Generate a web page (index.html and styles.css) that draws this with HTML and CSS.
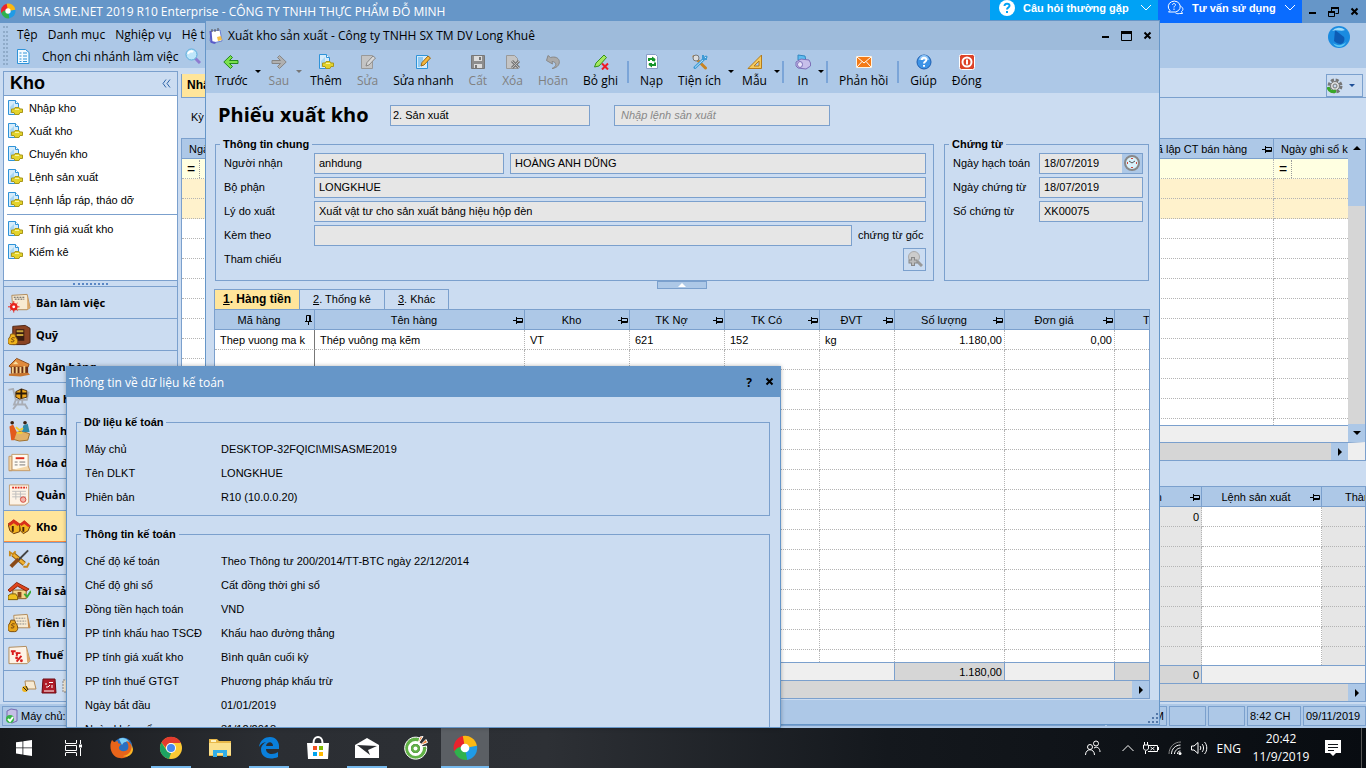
FILE: index.html
```html
<!DOCTYPE html>
<html lang="vi">
<head>
    <meta charset="UTF-8">
    <meta name="viewport" content="width=device-width, initial-scale=1.0">
    <title>MISA SME.NET 2019 R10 Enterprise</title>
    <link rel="stylesheet" href="styles.css">
</head>
<body>
    <svg class="sprite" aria-hidden="true">
        <symbol id="i-misa" viewBox="0 0 24 24">
            <path d="M12 12 2 15A11 11 0 0 1 10 1Q15 5 12 12z" fill="#e8232d"/>
            <path d="M12 12 10 1A11 11 0 0 1 23 10Q18 15 12 12z" fill="#fbb813"/>
            <path d="M12 12 23 10A11 11 0 0 1 14 23Q9 19 12 12z" fill="#1f9be6"/>
            <path d="M12 12 14 23A11 11 0 0 1 2 15Q6 9 12 12z" fill="#2fb24c"/>
            <circle cx="12" cy="12" r="4" fill="#fff"/>
        </symbol>
        <symbol id="i-new" viewBox="0 0 16 16">
            <path d="M1.500 .5h7l3 3v11h-10z" fill="#d5ecfb" stroke="#2f93d8"/>
            <path d="M8.500 .5v3h3" fill="#fff" stroke="#2f93d8"/>
            <path d="M3 13V7l4-4v10z" fill="#a7d6f5"/>
            <path d="M8 7.500h4l1 1.500h2.500v3.500H13L12 14.500H8L7 12.500H4.500V9H7z" fill="#e3d32c" stroke="#a8971a" stroke-linejoin="round"/>
            <path d="M8 9.500h4" stroke="#f8f3a0"/>
        </symbol>
        <symbol id="i-edit" viewBox="0 0 16 16">
            <path d="M1.500 1.500h11v13h-11z" fill="#d5ecfb" stroke="#2f93d8"/>
            <path d="M3 3h5v5L5 13H3z" fill="#8fc9f2"/>
            <path d="M6 12l1-3.500L13 2l2.500 2L9 11z" fill="#f6b73c" stroke="#9b6a17"/>
        </symbol>
        <symbol id="i-edit-off" viewBox="0 0 16 16">
            <path d="M1.500 1.500h11v13h-11z" fill="#c4c4c4" stroke="#999"/>
            <path d="M6 12l1-3.500L13 2l2.500 2L9 11z" fill="#d8d8d8" stroke="#888"/>
        </symbol>
        <symbol id="i-left" viewBox="0 0 16 16">
            <path d="M7.500 1.500 9.500 3.500 6.500 6.500H15v3H6.500l3 3-2 2L.8 8z" fill="#7be04c" stroke="#238a1c" stroke-linejoin="round"/>
        </symbol>
        <symbol id="i-right" viewBox="0 0 16 16">
            <path d="M8.500 1.500 6.500 3.500 9.500 6.500H1v3h8.500l-3 3 2 2L15.200 8z" fill="#b0b0b0" stroke="#858585" stroke-linejoin="round"/>
        </symbol>
        <symbol id="i-save" viewBox="0 0 16 16">
            <path d="M1.500 1.500h13v13h-13z" fill="#8d8d8d" stroke="#777"/>
            <path d="M4 2h8v5H4zM4 10h8v4H4z" fill="#dcdcdc"/>
            <path d="M9 3h2v3H9zM5 11h2v3H5z" fill="#777"/>
        </symbol>
        <symbol id="i-del" viewBox="0 0 16 16">
            <path d="M1.500 1.500h8l3 3v10h-11z" fill="#c4c4c4" stroke="#999"/>
            <path d="M7 7l7 7M14 7l-7 7" stroke="#777" stroke-width="3"/>
            <path d="M7 7l7 7M14 7l-7 7" stroke="#bbb"/>
        </symbol>
        <symbol id="i-undo" viewBox="0 0 16 16">
            <path d="M7 14.500c5-1.500 5-7 0-7L7.500 10 1.500 6.500 3 1.500l2.500 2c11-3 12 10 1.500 11z" fill="#aaa" stroke="#888"/>
        </symbol>
        <symbol id="i-unpost" viewBox="0 0 16 16">
            <path d="M1.500 13 3 9l8-8 2.500 2.500L6 12z" fill="#a4e860" stroke="#35911b"/>
            <path d="M9 9.500l6 6M15 9.500l-6 6" stroke="#ee1c24" stroke-width="2"/>
        </symbol>
        <symbol id="i-reload" viewBox="0 0 16 16">
            <path d="M2.500 .5h9l2 2v12h-11z" fill="#fff" stroke="#8a9cc8"/>
            <path d="M5 7V5h4M11 8.500V11H7" stroke="#15942b" stroke-width="2" fill="none"/>
            <path d="M8 2.500l3.500 2.500L11 7.500 8 7zM8 9v4.500L4.500 11l.5-2z" fill="#15942b"/>
        </symbol>
        <symbol id="i-tools" viewBox="0 0 16 16">
            <path d="M2 2.500 13.500 14" stroke="#c98423" stroke-width="3" stroke-linecap="round"/>
            <path d="M14 3 3 13.500" stroke="#3e9ad5" stroke-width="3" stroke-linecap="round"/>
            <path d="M14 3 3 13.500" stroke="#c9e9fb"/>
            <circle cx="4" cy="4" r="3" fill="#ddd" stroke="#777"/>
            <path d="M11 1v4h4" fill="none" stroke="#3e9ad5" stroke-width="2"/>
        </symbol>
        <symbol id="i-ruler" viewBox="0 0 16 16">
            <path d="M1 14.500 14.500 1v13.500z" fill="#f5c95a" stroke="#b37b1c"/>
            <path d="M7 12l5-5v5z" fill="#adc8e7" stroke="#b37b1c"/>
        </symbol>
        <symbol id="i-print" viewBox="0 0 16 16">
            <path d="M3 6V1l7 1 1 5z" fill="#5dbcf0" stroke="#3387c0"/>
            <path d="M1 8l5-3 8 1 1.500 3v3L11 15l-8-1-2-2z" fill="#c7bfea" stroke="#7d70b8"/>
            <ellipse cx="5" cy="10.500" rx="2.500" ry="3" fill="#e7e3fa" stroke="#7d70b8"/>
        </symbol>
        <symbol id="i-mail" viewBox="0 0 16 16">
            <path d="M.5 2.500h15v11H.5z" fill="#f47a16" stroke="#fff3e0"/>
            <path d="M1 3l7 6 7-6M1 13l5-5.500M15 13l-5-5.500" stroke="#fff" fill="none"/>
        </symbol>
        <symbol id="i-help" viewBox="0 0 16 16">
            <circle cx="8" cy="8" r="7" fill="#3d93e6" stroke="#1f5fb0"/>
            <path d="M3 6a5 5 0 0 1 10 0z" fill="#8cc4f7"/>
            <path d="M5.800 6c0-3 4.600-3 4.600-.3C10.400 7.500 8 7.500 8 9.500M8 11v1.800" stroke="#fff" stroke-width="2" fill="none"/>
        </symbol>
        <symbol id="i-power" viewBox="0 0 16 16">
            <rect x=".5" y=".5" width="15" height="15" rx="2" fill="#dd4226" stroke="#fff"/>
            <circle cx="8" cy="8" r="4.500" fill="none" stroke="#fff" stroke-width="2"/>
            <path d="M8 5.500v5" stroke="#fff" stroke-width="2"/>
        </symbol>
        <symbol id="i-pin" viewBox="0 0 10 10">
            <path d="M0 5.500h3M3.500 2v7M4 3.500h5.500v4H4M4 6.500h5" stroke="#000" fill="none"/>
        </symbol>
        <symbol id="i-pin-down" viewBox="0 0 10 10">
            <path d="M5.500 10V7M2 6.500h7M3.500 6V.5h4V6M6.500 1v5" stroke="#000" fill="none"/>
        </symbol>
        <symbol id="i-min" viewBox="0 0 10 10"><path d="M1 6h7" stroke="#000" stroke-width="2"/></symbol>
        <symbol id="i-max" viewBox="0 0 12 10"><path d="M.5 1.500h10v8H.5z" fill="none" stroke="#000"/><path d="M0 1.500h11" stroke="#000" stroke-width="3"/></symbol>
        <symbol id="i-restore" viewBox="0 0 12 10"><path d="M3.500 4V1.500h7v5H7.500M.5 4.500h6v5h-6z" fill="none" stroke="#000"/><path d="M3 1h8M0 5h7" stroke="#000" stroke-width="2"/></symbol>
        <symbol id="i-close" viewBox="0 0 10 10"><path d="M1.500 1.500l6 6M7.500 1.500l-6 6" stroke="#000" stroke-width="2"/></symbol>
        <symbol id="i-down" viewBox="0 0 12 7"><path d="M1 1l5 5 5-5" stroke="#fff" fill="none"/></symbol>
    </svg>

    <div class="desktop">
        <div class="app">
            <header class="titlebar">
                <svg class="logo"><use href="#i-misa"/></svg>
                <span class="title">MISA SME.NET 2019 R10 Enterprise - CÔNG TY TNHH THỰC PHẨM ĐỖ MINH</span>
                <button class="promo promo-faq">
                    <svg width="16" height="16" viewBox="0 0 16 16"><circle cx="8" cy="8" r="8" fill="#fff"/><path d="M5.500 6c0-3 5-3 5-.3C10.500 7.500 8 7.500 8 9.500M8 11v2" stroke="#00a2f5" stroke-width="2" fill="none"/></svg>
                    <span>Câu hỏi thường gặp</span>
                    <svg width="12" height="7"><use href="#i-down"/></svg>
                </button>
                <button class="promo promo-chat">
                    <svg width="17" height="15" viewBox="0 0 17 15"><path d="M3 10.500A6 5.500 0 1 1 6 12H1.500z" fill="none" stroke="#fff"/><path d="M5.500 5c0-2 3-2 3 0 0 1-1.500 1-1.500 2.500M7 8.500V10M13.500 6c3 2 3 4 1 5.500l1 2h-3c-2 .5-3 0-4-.5" stroke="#fff" fill="none"/></svg>
                    <span>Tư vấn sử dụng</span>
                    <svg width="12" height="7"><use href="#i-down"/></svg>
                </button>
                <div class="winctl">
                    <button aria-label="Thu nhỏ"><svg width="10" height="10"><use href="#i-min"/></svg></button>
                    <button aria-label="Khôi phục"><svg width="12" height="10"><use href="#i-restore"/></svg></button>
                    <button aria-label="Thoát"><svg width="10" height="10"><use href="#i-close"/></svg></button>
                </div>
            </header>

            <div class="menus">
                <i class="menu-grip"></i>
                <div class="menu-rows">
                    <nav class="menu">
                        <a href="#">Tệp</a><a href="#">Danh mục</a><a href="#">Nghiệp vụ</a><a href="#">Hệ thống</a>
                    </nav>
                    <div class="menu branch">
                        <svg width="13" height="15" viewBox="0 0 13 15"><path d="M.5.500h8l3.500 3v11H.5z" fill="#f2faff" stroke="#2f93d8"/><path d="M2.500 4h2M6 4h4M2.500 7h2M6 7h4M2.500 10h2M6 10h4M2.500 12.500h2M6 12.500h4" stroke="#2f93d8"/></svg>
                        <a href="#">Chọn chi nhánh làm việc</a>
                        <svg width="16" height="16" viewBox="0 0 16 16"><path d="M10 10l5 5" stroke="#8e7bd0" stroke-width="3"/><circle cx="6.500" cy="6.500" r="5.500" fill="#bfe6fa" stroke="#5aaedc"/><path d="M3 6c1-3 4-3 5-2" stroke="#fff" stroke-width="2" fill="none"/></svg>
                    </div>
                </div>
                <svg class="globe" viewBox="0 0 22 22"><circle cx="11" cy="11" r="11" fill="#1a8be0"/><path d="M7 4l9 7c1 3 0 6-3 7-3 0-5-1-7-3z" fill="#0d5cb5"/><path d="M4 5a9 9 0 0 1 13-1c-4 2-8-1-13 1z" fill="#9fdcfb"/><path d="M5 17c4 3 9 3 13-1-2 6-10 7-13 1z" fill="#5cc8f5"/></svg>
            </div>

            <div class="workspace">
                <aside class="sidebar">
                    <div class="side-head"><h2>Kho</h2><svg width="9" height="9" viewBox="0 0 9 9"><path d="M4 .5l-3 4 3 4M8 .5l-3 4 3 4" stroke="#2f64a8" fill="none"/></svg></div>
                    <ul class="side-list">
                        <li><svg><use href="#i-new"/></svg><a href="#">Nhập kho</a></li>
                        <li><svg><use href="#i-new"/></svg><a href="#">Xuất kho</a></li>
                        <li><svg><use href="#i-new"/></svg><a href="#">Chuyển kho</a></li>
                        <li><svg><use href="#i-new"/></svg><a href="#">Lệnh sản xuất</a></li>
                        <li><svg><use href="#i-new"/></svg><a href="#">Lệnh lắp ráp, tháo dỡ</a></li>
                        <li class="divided"><svg><use href="#i-new"/></svg><a href="#">Tính giá xuất kho</a></li>
                        <li><svg><use href="#i-new"/></svg><a href="#">Kiểm kê</a></li>
                    </ul>
                    <div class="side-grip"><i></i></div>
                    <nav class="modules">
                        <a href="#"><svg viewBox="0 0 24 20"><path d="M4 2l16-1 3 14-3 2H5z" fill="#f7ead2" stroke="#b08a5a"/><path d="M6 4h11M7 6h10" stroke="#555" stroke-dasharray="2 1"/><path d="M20 1l3 14-3 2z" fill="#d9a76a"/><circle cx="6" cy="14" r="4" fill="#e8241c"/><path d="M6 8v12M0 14h12M2 10l8 8M10 10l-8 8" stroke="#e8241c"/><circle cx="6" cy="14" r="1.500" fill="#fff"/></svg>Bàn làm việc</a>
                        <a href="#"><svg viewBox="0 0 24 22"><path d="M5 2l13-1 5 3v15l-5 2H5z" fill="#8a4322" stroke="#4d2412"/><path d="M8 5h9v12H8z" fill="#3a1d10"/><path d="M9 7h7M9 11h7" stroke="#c9a33a" stroke-width="2"/><path d="M3 10h4l1 3c3 3 3 8-1 8H3c-4 0-4-5-1-8z" fill="#f0b41c" stroke="#8a5a10"/><path d="M7 14c-4-1-4 2-2 2s2 3-2 2" stroke="#6b3a08" fill="none"/></svg>Quỹ</a>
                        <a href="#"><svg viewBox="0 0 24 20"><path d="M1 9L9 1l13 6-1 3H2z" fill="#e08a3c" stroke="#8a4a18"/><path d="M3 10h18v7H3z" fill="#6b2e14"/><path d="M5 10v7M9 10v7M13 10v7M17 9v8" stroke="#f4cf8a" stroke-width="2"/><path d="M1 17l20-1 2 2-10 2-12-1z" fill="#c9752e"/><path d="M8 4l3 3H5z" fill="#f9e0a0"/></svg>Ngân hàng</a>
                        <a href="#"><svg viewBox="0 0 24 24"><path d="M0 2l5-1 3 12h12l2-9M8 13l-2 5h13M9 18l-4 5M18 18l3 5M11 14l-1 4M15 14v4" fill="none" stroke="#a9adb5" stroke-width="2"/><path d="M8 4l6-3 6 2v7l-8 2-4-2z" fill="#f0a91c" stroke="#4a2a08"/><path d="M14 1v10M8 6h12" stroke="#2b1a08" stroke-width="2"/></svg>Mua hàng</a>
                        <a href="#"><svg viewBox="0 0 24 24"><path d="M5 15l9-3 9 3-2 7-9 1-7-2z" fill="#e2b167" stroke="#9b6a26"/><path d="M1 7l4-2 4 8-3 9H3z" fill="#e35b1c"/><path d="M16 6l5-2 2 9h-8z" fill="#2f8aa8"/><circle cx="4" cy="3" r="2" fill="#3a2010"/><circle cx="18" cy="3" r="2" fill="#3a2010"/><path d="M8 8l4 3 4-2M9 14h6" stroke="#f3cf30" stroke-width="2" fill="none"/></svg>Bán hàng</a>
                        <a href="#"><svg viewBox="0 0 24 20"><path d="M4 1h17v16H4z" fill="#fffaf0" stroke="#c39a6a"/><path d="M1 3h3v15H1zM1 18h22l-2-5" fill="#f4d7a8" stroke="#c39a6a"/><path d="M8 5h9" stroke="#e02a1c" stroke-width="2"/><path d="M7 9h3M12 9h6M7 12h3M12 12h6" stroke="#777"/></svg>Hóa đơn</a>
                        <a href="#"><svg viewBox="0 0 24 24"><path d="M1 1h21v19l-4 3H1z" fill="#fdf3e6" stroke="#c39a6a"/><path d="M4 4h16" stroke="#e02a1c" stroke-width="2" stroke-dasharray="2 1"/><path d="M4 8h15M4 11h15M4 14h15M8 8v9M13 8v9" stroke="#bcbcbc"/><circle cx="16" cy="17" r="3" fill="#f2b3a8" stroke="#d3453a"/></svg>Quản lý hóa đơn</a>
                        <a href="#" class="active"><svg viewBox="0 0 24 20"><path d="M0 8l6-4 7 5-1 7-6 2-4-3z" fill="#f2b420" stroke="#6b3508"/><path d="M0 8l6-5 7 5-3 2-4-3-4 3z" fill="#d9301c"/><path d="M12 9l5-4 6 5-2 5-5 3-3-3z" fill="#f2b420" stroke="#6b3508"/><path d="M12 8l5-4 7 6-3 1-4-3-3 2z" fill="#d9301c"/><path d="M5 10v6M16 11v5" stroke="#4a2408" stroke-width="2"/></svg>Kho</a>
                        <a href="#"><svg viewBox="0 0 24 20"><path d="M5 5l12 10" stroke="#8a5a10" stroke-width="5"/><path d="M5 5l12 10" stroke="#f0b030" stroke-width="3"/><path d="M2 7V3l3 2 3-3M16 18l4 0 2-4" stroke="#c98a1c" stroke-width="2" fill="none"/><path d="M21 1L11 11" stroke="#444" stroke-width="2"/><path d="M11 10l-8 8" stroke="#8a4a18" stroke-width="4"/></svg>Công cụ dụng cụ</a>
                        <a href="#"><svg viewBox="0 0 24 20"><path d="M5 9h14v9H5z" fill="#f4d58a" stroke="#8a5a20"/><path d="M0 9l9-8 13 7-3 2-9-5-8 6z" fill="#e0441c" stroke="#8a2408"/><path d="M10 11h4v6h-4z" fill="#8a4a18"/><path d="M0 15l3-2h5l2 3v3H0z" fill="#f0c01c" stroke="#7a5a08"/><path d="M17 13l3 3 4-6" stroke="#39a935" stroke-width="2" fill="none"/></svg>Tài sản cố định</a>
                        <a href="#"><svg viewBox="0 0 24 20"><path d="M6 2l14-1 3 14H7z" fill="#f7ead2" stroke="#b08a5a"/><path d="M8 5h10M9 8h10M9 11h10" stroke="#888" stroke-dasharray="2 1"/><path d="M20 1l3 14h-2z" fill="#c98a4a"/><path d="M3 7h4l1 3c3 3 3 9-1 9H3c-4 0-4-6-1-9z" fill="#e8a51c" stroke="#7a4a08"/><path d="M7 11c-4-1-4 2-2 2s2 3-2 2" stroke="#6b3a08" fill="none"/></svg>Tiền lương</a>
                        <a href="#"><svg viewBox="0 0 24 20"><path d="M1 2l18-1 4 15-3 3H1z" fill="#fdf3e6" stroke="#b08a5a"/><path d="M19 2l4 14-3 2z" fill="#d9a76a"/><path d="M3 6h5M5 6v4M8 8h5M10 7l-1 4M9 17l5-6" stroke="#d81c1c" stroke-width="2" fill="none"/><circle cx="9" cy="13" r="1.500" fill="#d81c1c"/><circle cx="14" cy="16" r="1.500" fill="#d81c1c"/></svg>Thuế</a>
                    </nav>
                    <div class="side-foot">
                        <svg viewBox="0 0 16 16"><path d="M4 3h9l2 8H5z" fill="#f7ead2" stroke="#b08a5a"/><circle cx="4" cy="11" r="3" fill="#f0b41c"/><path d="M2 9l4 4M5 8l2 4" stroke="#222"/></svg>
                        <svg viewBox="0 0 16 16"><path d="M2 1h12l1 14H1z" fill="#b01c28" stroke="#6b0c14"/><path d="M4 6h2M8 4.500h4M5 9h2l2-2M11 7v3M3 13h10" stroke="#fff" fill="none"/></svg>
                        <svg viewBox="0 0 16 16"><path d="M2 2h12v12H2z" fill="#f4ead8" stroke="#888" stroke-dasharray="2 1"/></svg>
                    </div>
                </aside>

                <main class="content">
                    <div class="tabline">
                        <a href="#" class="doc-tab">Nhập, xuất kho</a>
                        <button class="gear" aria-label="Tùy chọn">
                            <svg width="16" height="16" viewBox="0 0 16 16"><circle cx="8" cy="8" r="6" fill="none" stroke="#777" stroke-width="3" stroke-dasharray="3 1.700"/><circle cx="8" cy="8" r="4.500" fill="#ddd" stroke="#777"/><circle cx="8" cy="8" r="2" fill="#cbdcf1" stroke="#777"/><path d="M1 9c1 5 5 5 8 4" stroke="#3aa828" stroke-width="3" fill="none"/></svg>
                            <i class="caret"></i>
                        </button>
                    </div>
                    <div class="filterbar">Kỳ</div>
                    <section class="grid list-grid">
                        <div class="grid-row">
                            <div class="grid-main">
                                <div class="grid-view">
                                    <table data-rows="11">
                                        <colgroup><col><col class="w140"><col class="w74"></colgroup>
                                        <thead><tr><th class="lead">Ngày</th><th><div><span>Đã lập CT bán hàng</span><svg><use href="#i-pin"/></svg></div></th><th class="lead">Ngày ghi sổ kho</th></tr></thead>
                                        <tbody>
                                            <tr class="filter"><td><span class="op">=</span></td><td></td><td><span class="op">=</span></td></tr>
                                            <tr class="hot"><td></td><td></td><td></td></tr>
                                            <tr class="hot"><td></td><td></td><td></td></tr>
                                        </tbody>
                                    </table>
                                </div>
                                <div class="strip"></div>
                            </div>
                            <div class="vscroll"><button aria-label="Lên"><i class="tri up"></i></button><div class="thumb"></div><div class="track"></div><button aria-label="Xuống"><i class="tri"></i></button></div>
                        </div>
                        <div class="hscroll corner"><button aria-label="Phải"><i class="tri right"></i></button></div>
                    </section>
                    <section class="grid detail-grid">
                        <div class="grid-view">
                            <table data-rows="7">
                                <colgroup><col><col class="w120"><col class="w43"></colgroup>
                                <thead><tr><th><div><span class="end">Số lượng tồn</span><svg><use href="#i-pin"/></svg></div></th><th><div><span>Lệnh sản xuất</span><svg><use href="#i-pin"/></svg></div></th><th class="lead far">Thành phẩm</th></tr></thead>
                                <tbody><tr><td class="num">0</td><td></td><td></td></tr></tbody>
                            </table>
                        </div>
                        <table class="totals">
                            <colgroup><col><col class="w163"></colgroup>
                            <tbody><tr><td class="num sum">0</td><td></td></tr></tbody>
                        </table>
                        <div class="hscroll"><button aria-label="Phải"><i class="tri right"></i></button></div>
                    </section>
                </main>
            </div>

            <footer class="statusbar">
                <div class="server"><svg width="14" height="16" viewBox="0 0 14 16"><path d="M2 3l4-2 6 1v11l-5 2-5-2z" fill="#c5bfe6" stroke="#776bb0"/><circle cx="5" cy="11" r="4" fill="#39b54a"/><path d="M3 11l2 2 3-4" stroke="#fff" stroke-width="2" fill="none"/></svg>Máy chủ: DESKTOP-32FQICI\MISASME2019</div>
                <div class="cell w60">NUM</div><div class="cell w37"></div><div class="cell w37"></div><div class="cell w54">8:42 CH</div><div class="cell w63">09/11/2019</div>
            </footer>
        </div>

        <section class="window voucher">
            <header class="win-title">
                <svg width="14" height="16" viewBox="0 0 14 16"><path d="M2 3l9-1 2 11-9 2-3-2z" fill="#fff" stroke="#6a7fd0"/><path d="M1.500 3l1 11 4 1" stroke="#5a5cc8" stroke-width="2" fill="none"/><path d="M3 1v3M6 1v3M9 0v3" stroke="#555"/><path d="M8 9l4-1 1 4-4 1z" fill="#f5c04a"/></svg>
                <span class="title">Xuất kho sản xuất - Công ty TNHH SX TM DV Long Khuê</span>
                <div class="winctl">
                    <button aria-label="Thu nhỏ"><svg width="10" height="10"><use href="#i-min"/></svg></button>
                    <button aria-label="Phóng to"><svg width="12" height="10"><use href="#i-max"/></svg></button>
                    <button aria-label="Đóng cửa sổ"><svg width="10" height="10"><use href="#i-close"/></svg></button>
                </div>
            </header>
            <div class="toolbar">
                <button><svg><use href="#i-left"/></svg>Trước</button><i class="caret"></i>
                <button disabled><svg><use href="#i-right"/></svg>Sau</button><i class="caret off"></i>
                <button><svg><use href="#i-new"/></svg>Thêm</button>
                <button disabled><svg><use href="#i-edit-off"/></svg>Sửa</button>
                <button><svg><use href="#i-edit"/></svg>Sửa nhanh</button>
                <button disabled><svg><use href="#i-save"/></svg>Cất</button>
                <button disabled><svg><use href="#i-del"/></svg>Xóa</button>
                <button disabled><svg><use href="#i-undo"/></svg>Hoãn</button>
                <button><svg><use href="#i-unpost"/></svg>Bỏ ghi</button>
                <i class="sep"></i>
                <button><svg><use href="#i-reload"/></svg>Nạp</button>
                <button><svg><use href="#i-tools"/></svg>Tiện ích</button><i class="caret"></i>
                <button><svg><use href="#i-ruler"/></svg>Mẫu</button><i class="caret"></i>
                <i class="sep"></i>
                <button><svg><use href="#i-print"/></svg>In</button><i class="caret"></i>
                <i class="sep"></i>
                <button><svg><use href="#i-mail"/></svg>Phản hồi</button>
                <i class="sep"></i>
                <button><svg><use href="#i-help"/></svg>Giúp</button>
                <button><svg><use href="#i-power"/></svg>Đóng</button>
            </div>
            <div class="voucher-body">
                <div class="voucher-head">
                    <h1>Phiếu xuất kho</h1>
                    <input type="text" class="kind" aria-label="Loại phiếu" value="2. Sản xuất" readonly>
                    <input type="text" class="order" aria-label="Lệnh sản xuất" placeholder="Nhập lệnh sản xuất" readonly>
                </div>
                <div class="groups">
                    <fieldset class="general">
                        <legend>Thông tin chung</legend>
                        <div class="field"><label for="receiver">Người nhận</label><input type="text" id="receiver" class="code" value="anhdung" readonly><input type="text" aria-label="Tên người nhận" value="HOÀNG ANH DŨNG" readonly></div>
                        <div class="field"><label for="dept">Bộ phận</label><input type="text" id="dept" value="LONGKHUE" readonly></div>
                        <div class="field"><label for="reason">Lý do xuất</label><input type="text" id="reason" value="Xuất vật tư cho sản xuất bảng hiệu hộp đèn" readonly></div>
                        <div class="field"><label for="attach">Kèm theo</label><input type="text" id="attach" readonly><span class="unit">chứng từ gốc</span></div>
                        <div class="field ref"><label for="reference">Tham chiếu</label><button id="reference" aria-label="Tham chiếu"><svg width="16" height="16" viewBox="0 0 16 16"><path d="M10 10l5 5" stroke="#999" stroke-width="3"/><circle cx="7" cy="6" r="5.500" fill="#ccc" stroke="#aaa"/><path d="M6 6v9M1.500 10.500h9" stroke="#888" stroke-width="4"/><path d="M6 7v7M2.500 10.500h7" stroke="#bbb" stroke-width="2"/></svg></button></div>
                    </fieldset>
                    <fieldset class="document">
                        <legend>Chứng từ</legend>
                        <div class="field"><label for="posted">Ngày hạch toán</label><div class="date"><input type="text" id="posted" value="18/07/2019" readonly><button aria-label="Chọn giờ"><svg width="16" height="16" viewBox="0 0 16 16"><circle cx="8" cy="8" r="7" fill="#d9f1fa" stroke="#888" stroke-width="2"/><path d="M8 3v1M8 12v1M3 8h1M12 8h1" stroke="#d3453a" stroke-width="2"/><path d="M5 6l3 2 3-2" stroke="#555" fill="none"/></svg></button></div></div>
                        <div class="field"><label for="dated">Ngày chứng từ</label><input type="text" id="dated" value="18/07/2019" readonly></div>
                        <div class="field"><label for="number">Số chứng từ</label><input type="text" id="number" value="XK00075" readonly></div>
                    </fieldset>
                </div>
                <button class="splitter" aria-label="Thu gọn"><i class="tri up"></i></button>
                <nav class="tabs">
                    <a href="#" class="active"><u>1</u>. Hàng tiền</a><a href="#"><u>2</u>. Thống kê</a><a href="#"><u>3</u>. Khác</a>
                </nav>
                <section class="grid item-grid">
                    <div class="grid-view">
                        <table data-rows="16">
                            <colgroup><col class="w100"><col><col class="w105"><col class="w95"><col class="w95"><col class="w75"><col class="w110"><col class="w110"><col class="w34"></colgroup>
                            <thead><tr>
                                <th><div><span>Mã hàng</span><svg><use href="#i-pin-down"/></svg></div></th>
                                <th><div><span>Tên hàng</span><svg><use href="#i-pin"/></svg></div></th>
                                <th><div><span>Kho</span><svg><use href="#i-pin"/></svg></div></th>
                                <th><div><span>TK Nợ</span><svg><use href="#i-pin"/></svg></div></th>
                                <th><div><span>TK Có</span><svg><use href="#i-pin"/></svg></div></th>
                                <th><div><span>ĐVT</span><svg><use href="#i-pin"/></svg></div></th>
                                <th><div><span>Số lượng</span><svg><use href="#i-pin"/></svg></div></th>
                                <th><div><span>Đơn giá</span><svg><use href="#i-pin"/></svg></div></th>
                                <th class="lead farther">Thành tiền</th>
                            </tr></thead>
                            <tbody><tr><td>Thep vuong ma k</td><td>Thép vuông mạ kẽm</td><td>VT</td><td>621</td><td>152</td><td>kg</td><td class="num">1.180,00</td><td class="num">0,00</td><td></td></tr></tbody>
                        </table>
                    </div>
                    <table class="totals">
                        <colgroup><col><col class="w110"><col class="w110"><col class="w34"></colgroup>
                        <tbody><tr><td></td><td class="num sum">1.180,00</td><td></td><td class="sum"></td></tr></tbody>
                    </table>
                    <div class="hscroll"><button aria-label="Phải"><i class="tri right"></i></button></div>
                </section>
            </div>
            <footer class="win-status"><svg width="12" height="12" viewBox="0 0 12 12"><path d="M9 1h2v2H9zM5 5h2v2H5zM9 5h2v2H9zM1 9h2v2H1zM5 9h2v2H5zM9 9h2v2H9z" fill="#5478a8"/></svg></footer>
        </section>

        <section class="window info">
            <header class="info-title"><span>Thông tin về dữ liệu kế toán</span><button aria-label="Trợ giúp">?</button><button aria-label="Đóng hộp thoại"><svg width="10" height="10"><use href="#i-close"/></svg></button></header>
            <div class="info-body">
                <fieldset>
                    <legend>Dữ liệu kế toán</legend>
                    <dl>
                        <dt>Máy chủ</dt><dd>DESKTOP-32FQICI\MISASME2019</dd>
                        <dt>Tên DLKT</dt><dd>LONGKHUE</dd>
                        <dt>Phiên bản</dt><dd>R10 (10.0.0.20)</dd>
                    </dl>
                </fieldset>
                <fieldset>
                    <legend>Thông tin kế toán</legend>
                    <dl>
                        <dt>Chế độ kế toán</dt><dd>Theo Thông tư 200/2014/TT-BTC ngày 22/12/2014</dd>
                        <dt>Chế độ ghi sổ</dt><dd>Cất đồng thời ghi sổ</dd>
                        <dt>Đồng tiền hạch toán</dt><dd>VND</dd>
                        <dt>PP tính khấu hao TSCĐ</dt><dd>Khấu hao đường thẳng</dd>
                        <dt>PP tính giá xuất kho</dt><dd>Bình quân cuối kỳ</dd>
                        <dt>PP tính thuế GTGT</dt><dd>Phương pháp khấu trừ</dd>
                        <dt>Ngày bắt đầu</dt><dd>01/01/2019</dd>
                        <dt>Ngày khóa sổ</dt><dd>31/12/2018</dd>
                    </dl>
                </fieldset>
            </div>
        </section>

        <footer class="taskbar">
            <button aria-label="Start"><svg width="16" height="16" viewBox="0 0 16 16"><path d="M0 2.300l6.500-.9v6.100H0zM7.300 1.300L16 0v7.500H7.300zM0 8.300h6.500v6.200L0 13.600zM7.300 8.300H16V16l-8.700-1.300z" fill="#fff"/></svg></button>
            <button aria-label="Task View"><svg width="17" height="16" viewBox="0 0 17 16"><path d="M.5 0v3M11.500 0v3M.5 3.500h11M.5 16v-3M11.500 16v-3M.5 12.500h11M.5 5.500h11v5H.5zM15.500 0v4M15.500 8v8" stroke="#fff" fill="none"/><path d="M14 4.500h3v3h-3z" fill="#fff"/></svg></button>
            <button aria-label="Firefox"><svg width="24" height="24" viewBox="0 0 24 24"><circle cx="13" cy="11" r="9.500" fill="#2a6fc0"/><path d="M9 3c3-2 8-1 10 3-3-1-6 0-7 3z" fill="#7fd0f5"/><path d="M2 4l2 2 4-1c-1 2 1 3 3 3l-2 3c-1 4 6 6 9 2 1-3 0-6-2-8 5 1 6 5 6 8-1 7-7 10-12 9C2 22-2 11 2 4z" fill="#e8641a"/><path d="M21 7c2 6-1 12-8 13 4 2 10-1 10-7z" fill="#fbb625"/></svg></button>
            <button aria-label="Chrome" class="open"><svg width="24" height="24" viewBox="0 0 24 24"><circle cx="12" cy="12" r="11" fill="#fcc934"/><path d="M2.500 6.500A11 11 0 0 1 22 7H12a5 5 0 0 0-5 5z" fill="#e33b2e"/><path d="M2.500 6.500l5.200 8A5 5 0 0 0 12 17l-2 6A11 11 0 0 1 2.500 6.500z" fill="#1ea362"/><circle cx="12" cy="12" r="5" fill="#fff"/><circle cx="12" cy="12" r="4" fill="#4688f1"/></svg></button>
            <button aria-label="File Explorer"><svg width="22" height="20" viewBox="0 0 22 20"><path d="M0 1h8l2 2h12v15H0z" fill="#e8b84a"/><path d="M0 5h22v12H0z" fill="#fbe08c"/><path d="M4 19v-7h14v7h-4v-4H8v4z" fill="#33aee8"/><path d="M2 2h5v2H2z" fill="#fff3c0"/></svg></button>
            <button aria-label="Edge" class="open"><svg width="22" height="22" viewBox="0 0 22 22"><path d="M1 10C2 3 7 0 12 0c6 0 9 5 9 9v3H8c0 6 8 6 12 3v5c-7 3-17 2-17-8 0-3 2-5 5-7-5 1-6 4-7 5zm7-1h7c0-5-6-5-7 0z" fill="#0a7fdb"/></svg></button>
            <button aria-label="Store"><svg width="24" height="24" viewBox="0 0 24 24"><path d="M1 7h22l-1 16H2z" fill="#fff"/><path d="M7.500 7c0-8 9-8 9 0" fill="none" stroke="#fff" stroke-width="2"/><path d="M7 10h4v4H7z" fill="#f25022"/><path d="M13 10h4v4h-4z" fill="#7fba00"/><path d="M7 16h4v4H7z" fill="#00a4ef"/><path d="M13 16h4v4h-4z" fill="#ffb900"/></svg></button>
            <button aria-label="Mail" class="open"><svg width="24" height="20" viewBox="0 0 24 20"><path d="M0 7l12-7 12 7v13H0z" fill="#fff"/><path d="M2 7l20 1-9 4 2 5z" fill="#2a2c30"/></svg></button>
            <button aria-label="Cốc Cốc"><svg width="24" height="24" viewBox="0 0 24 24"><path d="M17 2.500A11 11 0 1 0 22.500 10l-5 1a6 6 0 1 1-3.500-4z" fill="#61b146" stroke="#fff"/><circle cx="11.500" cy="12.500" r="6" fill="none" stroke="#fff" stroke-width="3"/><circle cx="11.500" cy="12.500" r="4.500" fill="#61b146"/><circle cx="11.500" cy="12.500" r="2" fill="#fff"/><path d="M14 8l2-7 3-.5zM16 9.500l6-6 1.500 3z" fill="#f47a2c" stroke="#fff"/></svg></button>
            <button aria-label="MISA SME.NET" class="open current"><svg width="26" height="26"><use href="#i-misa"/></svg></button>
            <div class="tray">
                <svg class="people" width="16" height="16" viewBox="0 0 16 16"><path d="M.5 15c0-7 9-7 9 0M9 8c3-2 6 0 6 4" fill="none" stroke="#fff"/><circle cx="5" cy="7" r="2.500" fill="none" stroke="#fff"/><circle cx="11" cy="3.500" r="2.500" fill="none" stroke="#fff"/></svg>
                <svg width="12" height="8" viewBox="0 0 12 8"><path d="M.5 7L6 1.500 11.500 7" stroke="#fff" fill="none"/></svg>
                <svg width="16" height="12" viewBox="0 0 16 12"><path d="M6 3.500h8.500v6H5M15.500 5v3M2.500 9v3M.5 3h5v3c0 3-5 3-5 0zM1.500 0v3M4.500 0v3M7.500 5l4 3M11.500 5l-4 3" stroke="#fff" fill="none"/></svg>
                <svg width="14" height="14" viewBox="0 0 14 14"><path d="M1 13C1 6 6 1 13 1" stroke="#888" fill="none"/><path d="M3.500 13c0-5 4-9 9-9M6.500 13c0-3 3-6 6-6M9.500 13c0-2 1-3 3-3" stroke="#fff" fill="none"/><circle cx="12" cy="12.500" r="1.500" fill="#fff"/></svg>
                <svg width="17" height="14" viewBox="0 0 17 14"><path d="M.5 5v4H3l4 3.500v-11L3 5zM9 5c1 1 1 3 0 4M11 3c2 2 2 6 0 8M13.500 1c3 3 3 9 0 12" stroke="#fff" fill="none"/></svg>
                <span>ENG</span>
                <time>20:42<br>11/9/2019</time>
                <svg width="16" height="17" viewBox="0 0 16 17"><path d="M0 0h16v13h-5l-3 3-3-3H0z" fill="#fff"/><path d="M3 4.500h10M3 7.500h10M3 10.500h6" stroke="#11151a"/></svg>
            </div>
        </footer>
    </div>

    <script>
// pad every grid with empty lines below its data
document.querySelectorAll('table[data-rows]').forEach(function(table) {
    const cols = table.querySelectorAll('col').length;
    for (let i = 0; i < Number(table.dataset.rows); i++) {
        const row = table.tBodies[0].insertRow();
        for (let c = 0; c < cols; c++) {
            row.insertCell();
        }
    }
});
    </script>
</body>
</html>
```
FILE: styles.css
```css
* {
    box-sizing: border-box;
}

body {
    margin: 0;
    font-family: "Liberation Sans", Arial, sans-serif;
    font-size: 11px;
    color: #000;
    overflow: hidden;
}

a {
    color: inherit;
    text-decoration: none;
}

button {
    margin: 0;
    padding: 0;
    border: 0;
    background: none;
    font: inherit;
    color: inherit;
}

svg {
    flex: none;
    display: block;
}

.sprite {
    position: absolute;
    width: 0;
    height: 0;
}

.desktop {
    position: relative;
    display: flex;
    flex-direction: column;
    height: 100vh;
    overflow: hidden;
}

.app {
    flex: 1;
    min-height: 0;
    display: flex;
    flex-direction: column;
    background-color: #cbdcf1;
}

/* main title bar */
.titlebar {
    display: flex;
    height: 23px;
    background-color: #6696c8;
    color: #fff;
    font-family: "Open Sans", "Noto Sans", sans-serif;
    font-size: 12px;
}

.titlebar .title {
    flex: 1;
    padding-left: 6px;
    line-height: 23px;
    white-space: nowrap;
}

.logo {
    width: 16px;
    height: 16px;
    margin-top: 3px;
}

.promo {
    display: flex;
    align-items: center;
    gap: 8px;
    height: 23px;
    padding: 0 6px 8px 9px;
    font-family: "Liberation Sans", Arial, sans-serif;
    font-size: 11px;
    font-weight: bold;
    color: #fff;
}

.promo span {
    flex: 1;
    text-align: left;
    white-space: nowrap;
}

.promo-faq {
    width: 168px;
    background-color: #00a2f5;
}

.promo-chat {
    width: 144px;
    background-color: #0a6cff;
}

.winctl {
    display: flex;
    align-items: center;
    gap: 10px;
    padding: 0 6px;
}

.menus {
    display: flex;
    height: 45px;
    padding: 0 16px 0 3px;
    background-color: #adc8e7;
    font-family: "Open Sans", "Noto Sans", sans-serif;
    font-size: 12px;
}

.menu-grip {
    width: 5px;
    margin: 3px 9px 3px 0;
    border: 0 dotted #8fabc9;
    border-width: 0 2px;
}

.menu-rows {
    flex: 1;
}

.menu {
    display: flex;
    align-items: center;
    gap: 10px;
    height: 22px;
}

.branch {
    gap: 6px;
}

.branch a {
    padding-left: 6px;
}

.globe {
    width: 22px;
    height: 22px;
    margin-top: 3px;
}

/* workspace */
.workspace {
    flex: 1;
    min-height: 0;
    display: flex;
    gap: 3px;
    padding: 3px 0 2px 3px;
}

.sidebar {
    display: flex;
    flex-direction: column;
    width: 175px;
    border: 1px solid #7ba0cd;
}

.side-head {
    display: flex;
    align-items: center;
    justify-content: space-between;
    height: 24px;
    padding: 0 6px;
    border-bottom: 1px solid #7ba0cd;
}

.side-head h2 {
    margin: 0;
    font-size: 18px;
}

.side-list {
    flex: 1;
    margin: 0;
    padding: 0 0 0 3px;
    list-style: none;
    background-color: #fff;
}

.side-list li {
    display: flex;
    align-items: center;
    gap: 6px;
    height: 23px;
}

.side-list svg {
    width: 16px;
    height: 16px;
}

.side-list .divided {
    height: 26px;
    margin-top: 3px;
    border-top: 1px solid #7ba0cd;
    padding-top: 2px;
}

.side-grip {
    display: flex;
    justify-content: center;
    align-items: center;
    height: 6px;
    border-top: 1px solid #7ba0cd;
}

.side-grip i {
    width: 35px;
    border-top: 2px dotted #5b87c4;
}

.modules a {
    display: flex;
    align-items: center;
    gap: 5px;
    height: 32px;
    padding-left: 4px;
    border-top: 1px solid #7ba0cd;
    font-family: "Noto Sans", "Open Sans", sans-serif;
    font-size: 11px;
    font-weight: bold;
}

.modules svg {
    width: 23px;
    height: 22px;
}

.modules .active {
    background-color: #ffe59a;
    border-bottom: 1px solid #ff8b3d;
}

.side-foot {
    display: flex;
    align-items: center;
    gap: 4px;
    height: 31px;
    padding-left: 17px;
    border-top: 1px solid #7ba0cd;
}

.side-foot svg {
    width: 16px;
    height: 16px;
}

.content {
    flex: 1;
    min-width: 0;
    display: flex;
    flex-direction: column;
}

.tabline {
    display: flex;
    justify-content: space-between;
    margin-top: 3px;
    height: 24px;
    border-bottom: 1px solid #7ba0cd;
}

.doc-tab {
    padding: 0 5px;
    border-left: 1px solid #7ba0cd;
    background-color: #ffe59a;
    font-size: 12px;
    font-weight: bold;
    line-height: 23px;
}

.gear {
    display: flex;
    align-items: center;
    gap: 4px;
    width: 37px;
    margin-right: 3px;
    border: 1px solid #7ba0cd;
}

.filterbar {
    height: 40px;
    padding-left: 10px;
    line-height: 38px;
}

/* data grids */
.grid {
    display: flex;
    flex-direction: column;
    min-height: 0;
    border: 1px solid #7ba0cd;
}

.grid-row {
    flex: 1;
    display: flex;
    min-height: 0;
}

.grid-main {
    flex: 1;
    min-width: 0;
    display: flex;
    flex-direction: column;
}

.grid-view {
    flex: 1;
    min-height: 0;
    overflow: hidden;
    background-color: #fff;
}

.strip {
    height: 17px;
    border-top: 1px solid #7ba0cd;
    background-color: #efefef;
}

.grid table {
    width: 100%;
    table-layout: fixed;
    border-collapse: separate;
    border-spacing: 0;
}

.grid th {
    height: 20px;
    padding: 0 1px 0 0;
    border-right: 1px solid #7ba0cd;
    border-bottom: 1px solid #7ba0cd;
    background-color: #adc8e7;
    font-weight: normal;
    white-space: nowrap;
    overflow: hidden;
}

.grid th div {
    display: flex;
    align-items: center;
}

.grid th span {
    flex: 1;
}

.grid th span.end {
    text-align: right;
    padding-right: 28px;
}

.grid th svg {
    width: 10px;
    height: 10px;
}

.grid th.lead {
    padding-left: 7px;
    text-align: left;
}

.grid th.far {
    padding-left: 23px;
}

.grid th.farther {
    padding-left: 28px;
}

.grid td {
    height: 20px;
    padding: 0 5px;
    border-right: 1px dotted #b4b4b4;
    border-bottom: 1px dotted #b4b4b4;
    white-space: nowrap;
}

.grid th:last-child,
.grid td:last-child {
    border-right: 0;
}

.grid .num {
    padding-right: 2px;
    text-align: right;
}

.grid .filter td {
    padding: 0 5px;
    background-color: #ffffe1;
}

.op {
    display: inline-block;
    width: 13px;
    border-right: 1px dotted #999;
    font-size: 14px;
    line-height: 18px;
}

.grid .hot td {
    background-color: #fff2cc;
}

.detail-grid td:first-child,
.detail-grid td:last-child {
    background-color: #e6e6e6;
}

.grid .totals td {
    height: 18px;
    border-top: 1px solid #7ba0cd;
    border-bottom: 0;
    border-right: 1px solid #7ba0cd;
    background-color: #efefef;
}

.grid .totals td:last-child {
    border-right: 0;
}

.grid .totals .sum {
    background-color: #d6d6d6;
}

.list-grid {
    height: 323px;
}

.detail-grid {
    flex: 1;
    margin-top: 25px;
}

.vscroll {
    display: flex;
    flex-direction: column;
    width: 17px;
    background-color: #d6d6d6;
}

.vscroll button {
    display: flex;
    align-items: center;
    justify-content: center;
    height: 18px;
    background-color: #adc8e7;
}

.thumb {
    height: 49px;
    background-color: #adc8e7;
}

.track {
    flex: 1;
}

.hscroll {
    display: flex;
    justify-content: flex-end;
    height: 18px;
    border-top: 1px solid #7ba0cd;
    background-color: #d6d6d6;
}

.hscroll.corner {
    border-right: 17px solid #efefef;
}

.hscroll button {
    display: flex;
    align-items: center;
    justify-content: center;
    width: 17px;
    background-color: #adc8e7;
}

.tri {
    width: 0;
    height: 0;
    border: 4px solid transparent;
    border-top-color: #000;
    border-bottom: 0;
}

.tri.up {
    border-top: 0;
    border-bottom: 4px solid #000;
}

.tri.right {
    border: 4px solid transparent;
    border-left-color: #000;
    border-right: 0;
}

.caret {
    width: 5px;
    height: 3px;
    border: 3px solid transparent;
    border-top-color: #000;
    border-bottom: 0;
}

.caret.off {
    border-top-color: #777;
}

.gear .caret {
    margin-left: 2px;
    border-top-color: #1f4f98;
}

.w34 { width: 34px; }
.w43 { width: 43px; }
.w74 { width: 74px; }
.w75 { width: 75px; }
.w95 { width: 95px; }
.w100 { width: 100px; }
.w105 { width: 105px; }
.w110 { width: 110px; }
.w120 { width: 120px; }
.w140 { width: 140px; }
.w163 { width: 163px; }

/* status bar */
.statusbar {
    display: flex;
    gap: 2px;
    height: 24px;
    padding: 2px 0 2px 2px;
    background-color: #adc8e7;
}

.statusbar div {
    display: flex;
    align-items: center;
    padding: 0 2px;
    border: 1px solid #7ba0cd;
}

.statusbar .server {
    flex: 1;
    gap: 2px;
}

.cell.w60 {
    width: 60px;
    justify-content: flex-end;
}

.cell.w37 { width: 37px; }
.cell.w54 { width: 54px; }
.cell.w63 { width: 63px; }

/* floating windows */
.window {
    position: absolute;
    background-color: #cbdcf1;
    border: 1px solid #6696c8;
}

.voucher {
    display: flex;
    flex-direction: column;
    top: 20px;
    right: 206px;
    bottom: 43px;
    left: 205px;
}

.win-title {
    display: flex;
    align-items: center;
    height: 29px;
    padding-left: 3px;
    background-color: #9ebbdb;
    font-family: "Open Sans", "Noto Sans", sans-serif;
    font-size: 12px;
}

.win-title .title {
    flex: 1;
    padding-left: 5px;
}

.toolbar {
    display: flex;
    align-items: center;
    height: 43px;
    padding-left: 1px;
    background-color: #adc8e7;
    font-family: "Open Sans", "Noto Sans", sans-serif;
    font-size: 12px;
}

.toolbar button {
    display: flex;
    flex-direction: column;
    align-items: center;
    gap: 3px;
    padding: 0 7px 0 8px;
    line-height: 16px;
    white-space: nowrap;
}

.toolbar button:disabled {
    color: #808080;
}

.toolbar svg {
    width: 16px;
    height: 16px;
}

.toolbar .sep {
    width: 2px;
    height: 22px;
    margin: 0 3px 0 2px;
    background-color: #7ba5d8;
}

.voucher-body {
    flex: 1;
    min-height: 0;
    display: flex;
    flex-direction: column;
    padding: 0 9px 1px 8px;
}

.voucher-head {
    display: flex;
    align-items: center;
    height: 44px;
    padding-left: 4px;
}

h1 {
    width: 172px;
    margin: 0;
    font-family: "Open Sans", "Noto Sans", sans-serif;
    font-size: 20px;
    line-height: 24px;
    white-space: nowrap;
}

input {
    flex: 1;
    min-width: 0;
    height: 21px;
    padding: 0 4px;
    border: 1px solid #7ba0cd;
    border-radius: 0;
    background-color: #e6e6e6;
    font: inherit;
    color: #000;
    outline: 0;
}

input::placeholder {
    color: #888;
    font-style: italic;
}

.kind {
    flex: 0 0 200px;
    padding: 0 2px;
}

.order {
    flex: 0 0 216px;
    margin-left: 24px;
    padding: 0 6px;
}

.groups {
    display: flex;
    gap: 10px;
    padding: 0 1px;
}

fieldset {
    min-width: 0;
    margin: 0;
    padding: 0 8px;
    border: 1px solid #7ba0cd;
}

legend {
    margin-left: -4px;
    padding: 0 3px;
    line-height: 14px;
    font-weight: bold;
}

.general {
    flex: 1;
    height: 144px;
    padding-right: 7px;
}

.document {
    width: 205px;
    padding-right: 5px;
}

.field {
    display: flex;
    align-items: center;
    gap: 6px;
    height: 24px;
}

.field label {
    width: 84px;
    white-space: nowrap;
}

.document .field label {
    width: 80px;
}

.field .code {
    flex: 0 0 190px;
}

.unit {
    width: 68px;
    white-space: nowrap;
}

.ref {
    justify-content: space-between;
}

.ref button {
    display: flex;
    align-items: center;
    justify-content: center;
    width: 23px;
    height: 23px;
    border: 1px solid #7ba0cd;
}

.date {
    flex: 1;
    min-width: 0;
    display: flex;
    border: 1px solid #7ba0cd;
    background-color: #adc8e7;
}

.date input {
    height: 19px;
    border: 0;
}

.date button {
    padding: 0 2px;
}

.splitter {
    display: flex;
    align-items: center;
    justify-content: center;
    align-self: center;
    width: 50px;
    height: 8px;
    border: 1px solid #7ba0cd;
    background-color: #adc8e7;
}

.splitter .tri {
    border-bottom-color: #fff;
}

.tabs {
    display: flex;
}

.tabs a {
    height: 20px;
    padding: 0 13px;
    border: 1px solid #7ba0cd;
    border-width: 1px 1px 0 0;
    line-height: 19px;
}

.tabs a.active {
    padding: 0 8px;
    border-left-width: 1px;
    background-color: #ffe59a;
    font-size: 12px;
    font-weight: bold;
}

.item-grid {
    flex: 1;
}

.item-grid tbody tr td:first-child {
    border-right: 1px solid #777;
}

.item-grid .totals td:first-child {
    border-right-color: #7ba0cd;
}

.win-status {
    display: flex;
    align-items: flex-end;
    justify-content: flex-end;
    height: 24px;
    background-color: #adc8e7;
}

.info {
    top: 366px;
    bottom: 40px;
    left: 66px;
    width: 715px;
    overflow: hidden;
    box-shadow: 0 0 4px rgba(0, 0, 0, 0.3);
}

.info-title {
    display: flex;
    align-items: center;
    gap: 13px;
    height: 30px;
    padding: 0 5px 0 2px;
    background-color: #6696c8;
    color: #fff;
    font-family: "Open Sans", "Noto Sans", sans-serif;
    font-size: 12px;
}

.info-title span {
    flex: 1;
}

.info-title button {
    color: #000;
    font-weight: bold;
}

.info-body {
    padding: 18px 10px 0 9px;
}

.info-body fieldset {
    margin-bottom: 11px;
}

dl {
    display: grid;
    grid-template-columns: 136px 1fr;
    margin: 0;
    padding: 8px 0 6px;
    line-height: 24px;
}

dd {
    margin: 0;
}

/* windows taskbar */
.taskbar {
    display: flex;
    gap: 1px;
    height: 40px;
    background: linear-gradient(90deg, #17191c, #2b2e33 20%, #2d3035 40%, #14181d 65%, #080c11);
    color: #fff;
    font-family: "Open Sans", "Noto Sans", sans-serif;
    font-size: 12px;
}

.taskbar button {
    display: flex;
    align-items: center;
    justify-content: center;
    width: 48px;
}

.taskbar .open {
    background: linear-gradient(#76b9ed, #76b9ed) center bottom / 40px 2px no-repeat;
}

.taskbar .current {
    background: linear-gradient(#76b9ed, #76b9ed) center bottom / 48px 2px no-repeat #5b5f64;
}

.tray {
    display: flex;
    align-items: center;
    gap: 9px;
    margin-left: auto;
    margin-right: 4px;
    padding-right: 20px;
    border-right: 1px solid #555;
}

.people {
    margin-right: 12px;
}

.tray time {
    width: 62px;
    margin-right: 4px;
    line-height: 18px;
    text-align: center;
}
```
